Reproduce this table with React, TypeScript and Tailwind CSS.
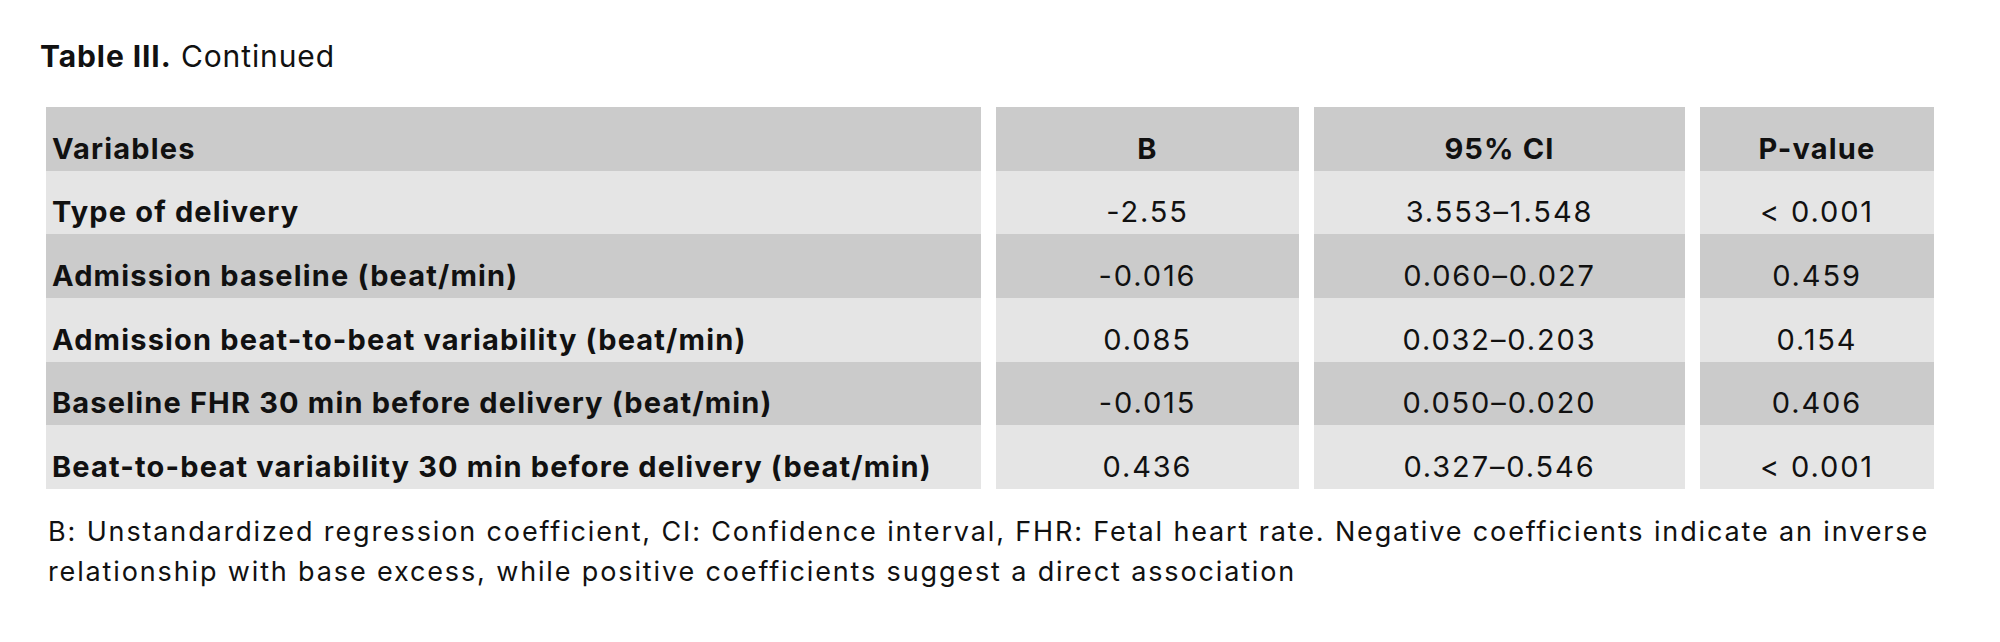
const rows = [
  { label: "Type of delivery", b: "-2.55", ci: "3.553–1.548", p: "< 0.001" },
  { label: "Admission baseline (beat/min)", b: "-0.016", ci: "0.060–0.027", p: "0.459" },
  { label: "Admission beat-to-beat variability (beat/min)", b: "0.085", ci: "0.032–0.203", p: "0.154" },
  { label: "Baseline FHR 30 min before delivery (beat/min)", b: "-0.015", ci: "0.050–0.020", p: "0.406" },
  { label: "Beat-to-beat variability 30 min before delivery (beat/min)", b: "0.436", ci: "0.327–0.546", p: "< 0.001" },
]

function Cell({ children, dark, bold, center }: { children: React.ReactNode; dark: boolean; bold?: boolean; center?: boolean }) {
  return (
    <div
      className={`flex h-[63.67px] items-end pb-[8px] text-[29px] leading-none ${dark ? "bg-[#cbcbcb]" : "bg-[#e5e5e5]"} ${bold ? "font-bold tracking-[0.04em]" : "font-normal tracking-[0.065em]"} ${center ? "justify-center" : "pl-[6px]"}`}>
      {children}
    </div>
  )
}

export default function App() {
  return (
    <div className="h-[642px] w-[2000px] bg-white text-[#111] font-['Inter','Liberation_Sans',sans-serif]">
      <div className="pl-[40px] pt-[41px] text-[30px] leading-none tracking-[0.03em]">
        <span className="font-bold">Table III.</span> Continued
      </div>

      <div className="ml-[46px] mt-[36px] grid w-max grid-cols-[935px_303px_371px_234px] gap-x-[15px]">
        <Cell dark bold>Variables</Cell>
        <Cell dark bold center>B</Cell>
        <Cell dark bold center>95% CI</Cell>
        <Cell dark bold center>P-value</Cell>
        {rows.map((r, i) => {
          const dark = i % 2 === 1
          return [
            <Cell key={r.label} dark={dark} bold>{r.label}</Cell>,
            <Cell key={r.label + "b"} dark={dark} center>{r.b}</Cell>,
            <Cell key={r.label + "ci"} dark={dark} center>{r.ci}</Cell>,
            <Cell key={r.label + "p"} dark={dark} center>{r.p}</Cell>,
          ]
        })}
      </div>

      <p className="ml-[48px] mt-[23px] w-[1890px] text-[27px] leading-[40px] tracking-[0.069em]">
        B: Unstandardized regression coefficient, CI: Confidence interval, FHR: Fetal heart rate. Negative coefficients indicate an inverse relationship with base excess, while positive coefficients suggest a direct association
      </p>
    </div>
  )
}
